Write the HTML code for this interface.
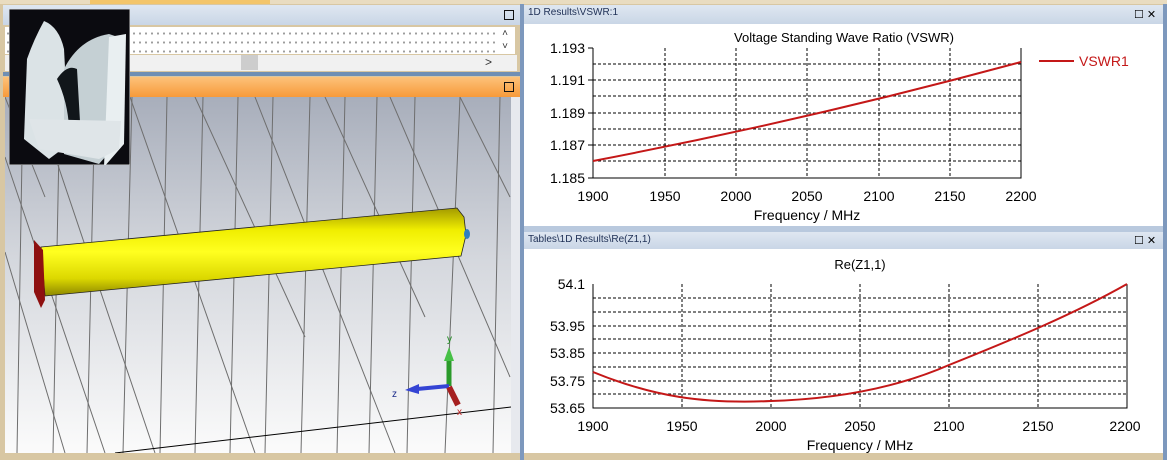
<!DOCTYPE html><html><head><style>
body{margin:0;width:1167px;height:460px;overflow:hidden;background:#d8c7a3;font-family:"Liberation Sans",sans-serif;position:relative}
.a{position:absolute}
.tb{background:linear-gradient(#dfe7f1,#c9d6e6);font-size:10px;color:#1e2f55;line-height:16px;padding-left:4px;box-sizing:border-box}
svg text{font-family:"Liberation Sans",sans-serif}
</style></head><body>
<div class="a" style="left:0;top:0;width:1167px;height:4px;background:#e9dcc0"></div>
<div class="a" style="left:90px;top:0;width:180px;height:4px;background:#f3c56a"></div>
<div class="a tb" style="left:3px;top:5px;width:517px;height:20px"></div>
<div class="a" style="left:504px;top:10px;width:8px;height:8px;border:1.5px solid #111"></div>
<div class="a" style="left:5px;top:27px;width:490px;height:27px;background:#fff;background-image:radial-gradient(#555 0.6px,transparent 0.8px);background-size:6px 9px;background-position:0 2px"></div>
<div class="a" style="left:495px;top:27px;width:20px;height:27px;background:#fff;font-size:10px;text-align:center;line-height:13px;color:#333">˄<br>˅</div>
<div class="a" style="left:5px;top:55px;width:512px;height:16px;background:#f1f1f1"></div>
<div class="a" style="left:241px;top:55px;width:17px;height:15px;background:#cdcdcd"></div>
<div class="a" style="left:485px;top:55px;font-size:12px;color:#333">&gt;</div>
<div class="a" style="left:3px;top:72px;width:517px;height:4px;background:#6f8fb4"></div>
<div class="a" style="left:3px;top:77px;width:517px;height:20px;background:linear-gradient(#fdc27a,#f79a3a)"></div>
<div class="a" style="left:504px;top:82px;width:8px;height:8px;border:1.5px solid #111"></div>
<svg class="a" style="left:5px;top:97px" width="506" height="356">
<defs><linearGradient id="g" x1="0" y1="0" x2="0" y2="1"><stop offset="0" stop-color="#a8aebb"/><stop offset="0.45" stop-color="#d4d7dd"/><stop offset="1" stop-color="#fbfbfb"/></linearGradient>
<linearGradient id="y" x1="0" y1="0" x2="0" y2="1"><stop offset="0" stop-color="#a39a00"/><stop offset="0.25" stop-color="#f0ee00"/><stop offset="0.5" stop-color="#ffff20"/><stop offset="0.8" stop-color="#dcd800"/><stop offset="1" stop-color="#8c8600"/></linearGradient></defs>
<rect width="506" height="356" fill="url(#g)"/>
<g stroke="#6e6e6e" stroke-width="1" fill="none">
<path d="M18 0 L12 356 M55 0 L48 356 M90 0 L82 356 M127 0 L118 356 M162 0 L155 356 M198 0 L190 356 M233 0 L225 356 M268 0 L260 356 M305 0 L296 356 M340 0 L332 356 M372 0 L364 356 M410 0 L402 356 M455 0 L440 356 M495 0 L488 356"/>
<path d="M0 0 L40 100 M30 0 L150 356 M125 0 L250 356 M190 0 L300 240 M250 0 L390 356 M320 0 L420 220 M385 0 L505 280 M455 0 L505 100 M0 60 L100 356 M0 155 L60 356"/>
</g>
<path d="M110 356 L506 310" stroke="#000" stroke-width="1"/>
<polygon points="36,150 452,111 459,120 461,138 456,159 40,199" fill="url(#y)" stroke="#222" stroke-width="0.8"/>
<polygon points="29,143 38,153 40,203 36,211 29,195" fill="#8e1010"/>
<ellipse cx="462" cy="137" rx="3" ry="5" fill="#2f7fc0"/>
<path d="M444 289 L444 262" stroke="#2a9a2a" stroke-width="5"/><polygon points="439,264 449,264 444,250" fill="#46c046"/>
<path d="M444 289 L412 292" stroke="#3444d4" stroke-width="4"/><polygon points="414,287 414,297 400,293" fill="#3444d4"/>
<path d="M444 290 L453 308" stroke="#a52020" stroke-width="6"/>
<text x="442" y="245" font-size="10" fill="#1a8a1a">y</text>
<text x="387" y="300" font-size="10" fill="#1b2b8b">z</text>
<text x="452" y="318" font-size="10" fill="#c01c1c">x</text>
</svg>
<div class="a" style="left:511px;top:97px;width:9px;height:356px;background:#e7e9ee"></div>
<svg class="a" style="left:9px;top:9px" width="121" height="156">
<rect width="121" height="156" fill="#0b0b10" stroke="#ccc"/>
<path d="M18 50 Q25 30 35 12 Q50 18 55 40 L60 135 L40 150 L15 130 Z" fill="#dbe3e6"/>
<path d="M55 60 Q70 30 100 25 L115 30 L112 130 L90 155 L55 145 Z" fill="#c5d0d4"/>
<path d="M100 28 L117 25 L115 135 L95 158 Z" fill="#e9eff1"/>
<path d="M48 70 Q58 55 68 60 L72 130 L60 135 Q62 100 48 70" fill="#11161a"/>
<path d="M20 110 L112 112 L110 140 L90 150 L30 140 Z" fill="#dfe5e8"/>
</svg>
<div class="a" style="left:520px;top:4px;width:4px;height:456px;background:#7d98bd"></div>
<div class="a tb" style="left:524px;top:5px;width:639px;height:19px">1D Results\VSWR:1</div>
<div class="a" style="left:1134px;top:10px;font-size:11px;line-height:10px">☐ ✕</div>
<svg class="a" style="left:524px;top:24px" width="640" height="202">
<rect width="640" height="202" fill="#fff"/>
<text x="320" y="18" font-size="13" text-anchor="middle">Voltage Standing Wave Ratio (VSWR)</text>
<g stroke="#000" stroke-dasharray="3,2" stroke-width="1">
<path d="M69 40H497M69 56H497M69 72H497M69 89H497M69 105H497M69 121H497M69 137H497"/>
<path d="M141 24V154M212 24V154M283 24V154M355 24V154M426 24V154"/></g>
<path d="M69 24V154H497V24" stroke="#000" fill="none"/>
<path d="M64 24H69M64 56H69M64 89H69M64 121H69M64 154H69" stroke="#000"/>
<g font-size="14" text-anchor="end"><text x="61" y="29">1.193</text><text x="61" y="61">1.191</text><text x="61" y="94">1.189</text><text x="61" y="126">1.187</text><text x="61" y="159">1.185</text></g>
<g font-size="14" text-anchor="middle"><text x="69" y="177">1900</text><text x="141" y="177">1950</text><text x="212" y="177">2000</text><text x="283" y="177">2050</text><text x="355" y="177">2100</text><text x="426" y="177">2150</text><text x="497" y="177">2200</text></g>
<text x="283" y="196" font-size="14" text-anchor="middle">Frequency / MHz</text>
<path d="M69 137 Q283 96 497 38" stroke="#c41818" stroke-width="2" fill="none"/>
<path d="M515 37H550" stroke="#c41818" stroke-width="2"/><text x="555" y="42" font-size="14" fill="#c41818">VSWR1</text>
</svg>
<div class="a" style="left:524px;top:226px;width:640px;height:6px;background:#b9c9de"></div>
<div class="a tb" style="left:524px;top:232px;width:639px;height:17px">Tables\1D Results\Re(Z1,1)</div>
<div class="a" style="left:1134px;top:236px;font-size:11px;line-height:10px">☐ ✕</div>
<svg class="a" style="left:524px;top:249px" width="640" height="204">
<rect width="640" height="204" fill="#fff"/>
<text x="336" y="20" font-size="13" text-anchor="middle">Re(Z1,1)</text>
<g stroke="#000" stroke-dasharray="3,2" stroke-width="1">
<path d="M69 49H603M69 63H603M69 77H603M69 90H603M69 104H603M69 118H603M69 132H603M69 145H603"/>
<path d="M158 35V159M247 35V159M336 35V159M425 35V159M514 35V159"/></g>
<path d="M69 35V159H603V35" stroke="#000" fill="none"/>
<g font-size="14" text-anchor="end"><text x="61" y="40">54.1</text><text x="61" y="82">53.95</text><text x="61" y="109">53.85</text><text x="61" y="137">53.75</text><text x="61" y="164">53.65</text></g>
<g font-size="14" text-anchor="middle"><text x="69" y="182">1900</text><text x="158" y="182">1950</text><text x="247" y="182">2000</text><text x="336" y="182">2050</text><text x="425" y="182">2100</text><text x="514" y="182">2150</text><text x="601" y="182">2200</text></g>
<text x="336" y="201" font-size="14" text-anchor="middle">Frequency / MHz</text>
<path d="M69 123 C130 148 180 155 247 152 C310 150 370 140 425 116 C490 90 550 65 603 35" stroke="#c41818" stroke-width="2" fill="none"/>
</svg>
<div class="a" style="left:1163px;top:4px;width:4px;height:456px;background:#7d98bd"></div>
</body></html>
